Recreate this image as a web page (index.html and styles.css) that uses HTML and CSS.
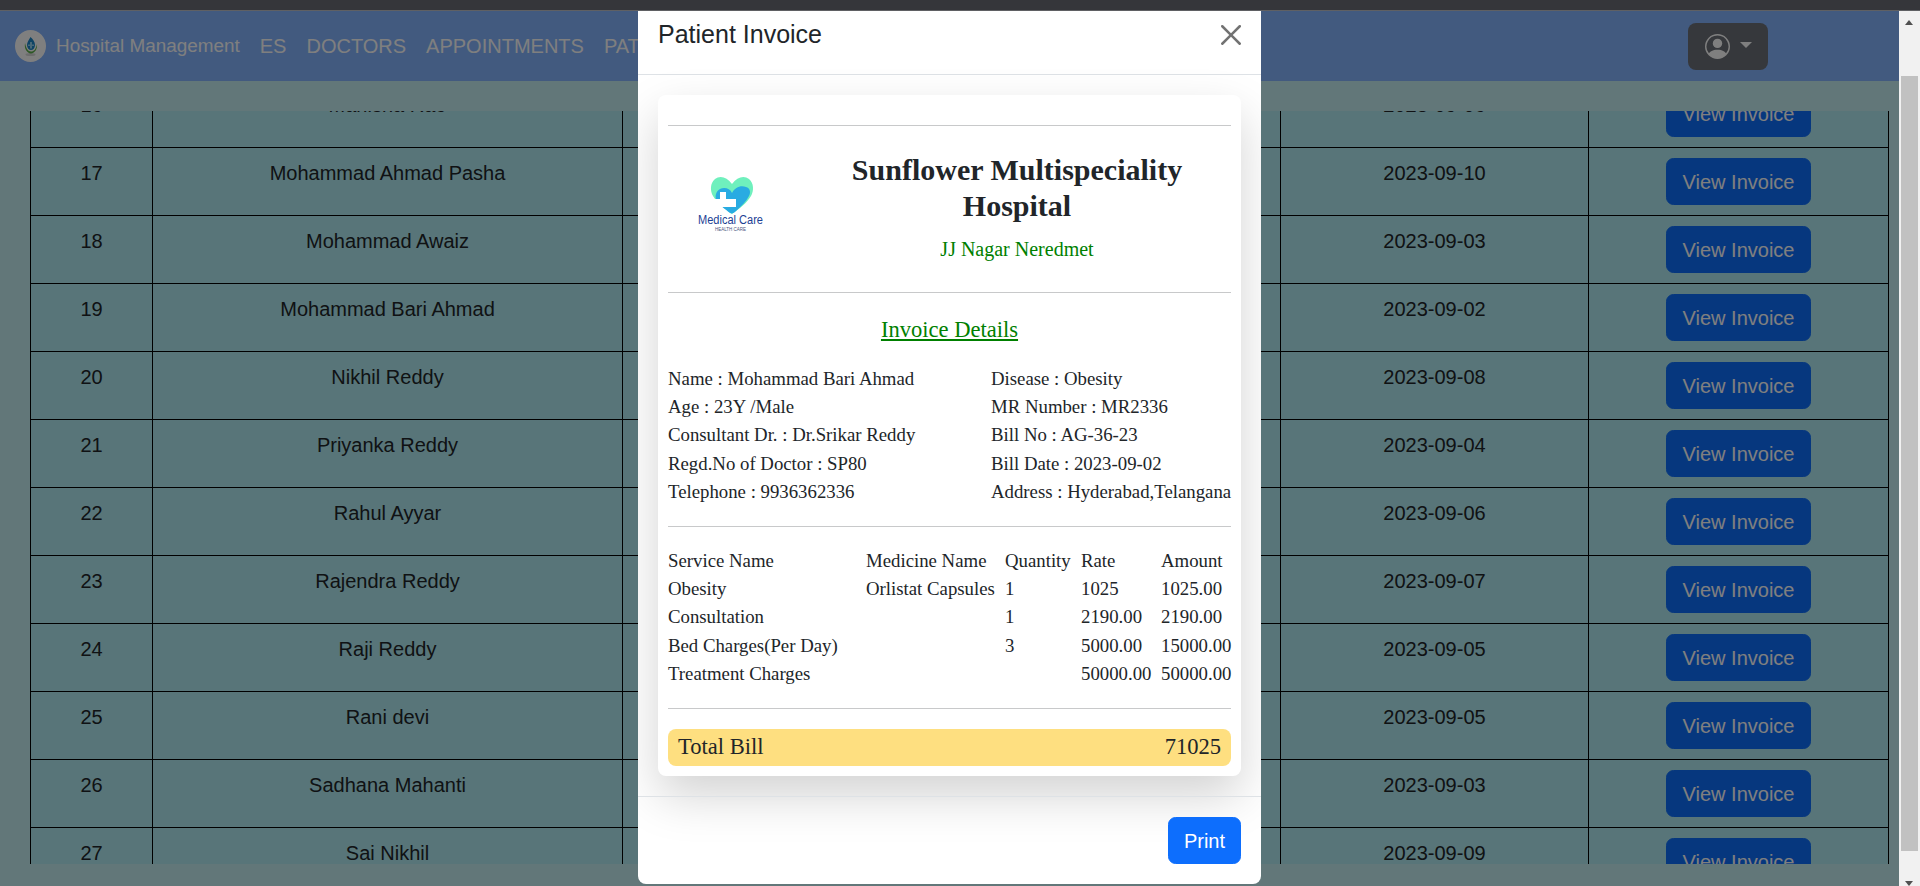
FILE: index.html
```html
<!DOCTYPE html>
<html>
    <head>
        <title>Hospital Management</title>
        <meta charset="UTF-8">
        <meta name="viewport" content="width=device-width, initial-scale=1.0">
        <link rel="stylesheet" href="styles.css">
    </head>
    <body>
        <div class="topstrip"></div>
        <div class="window">
            <div class="page">
                <nav class="navbar">
                    <svg class="brand-logo" viewBox="0 0 31 32">
                        <ellipse cx="15.5" cy="16" rx="15.5" ry="16" fill="#fff"/>
                        <ellipse cx="15.5" cy="24.500" rx="5" ry="1.500" fill="#d8d8d8"/>
                        <path d="M10 13C9 19 12 23 16 23.500C20 23 22.500 19 22 14C21 19 19 21.500 16 21.500C13 21.500 11 18 10 13Z" fill="#5bb04a"/>
                        <path d="M15.500 7C18 9 20 12 20 15C20 18 18 20 16 20C14 20 12 18 12 15C12 12 14 10 15.500 7Z" fill="#1b86c9"/>
                        <path d="M15 12H17V14.500H19V16H17V18.500H15V16H13V14.500H15Z" fill="#8fd0f0"/>
                    </svg>
                    <a class="brand">Hospital Management</a>
                    <a class="nav-link">ES</a>
                    <a class="nav-link">DOCTORS</a>
                    <a class="nav-link">APPOINTMENTS</a>
                    <a class="nav-link">PATIENTS</a>
                    <button class="profile-btn">
                        <svg class="profile-icon" viewBox="0 0 16 16" fill="currentColor">
                            <path d="M11 6a3 3 0 1 1-6 0 3 3 0 0 1 6 0z"/>
                            <path fill-rule="evenodd" d="M0 8a8 8 0 1 1 16 0A8 8 0 0 1 0 8zm8-7a7 7 0 0 0-5.468 11.37C3.242 11.226 4.805 10 8 10s4.757 1.225 5.468 2.37A7 7 0 0 0 8 1z"/>
                        </svg>
                        <span class="caret"></span>
                    </button>
                </nav>
                <div class="content">
                    <div class="table-clip">
                        <table class="patients">
                            <tbody>
                                <tr><td>16</td><td>Manisha Rao</td><td></td><td>2023-09-06</td><td><button class="view-btn">View Invoice</button></td></tr>
                                <tr><td>17</td><td>Mohammad Ahmad Pasha</td><td></td><td>2023-09-10</td><td><button class="view-btn">View Invoice</button></td></tr>
                                <tr><td>18</td><td>Mohammad Awaiz</td><td></td><td>2023-09-03</td><td><button class="view-btn">View Invoice</button></td></tr>
                                <tr><td>19</td><td>Mohammad Bari Ahmad</td><td></td><td>2023-09-02</td><td><button class="view-btn">View Invoice</button></td></tr>
                                <tr><td>20</td><td>Nikhil Reddy</td><td></td><td>2023-09-08</td><td><button class="view-btn">View Invoice</button></td></tr>
                                <tr><td>21</td><td>Priyanka Reddy</td><td></td><td>2023-09-04</td><td><button class="view-btn">View Invoice</button></td></tr>
                                <tr><td>22</td><td>Rahul Ayyar</td><td></td><td>2023-09-06</td><td><button class="view-btn">View Invoice</button></td></tr>
                                <tr><td>23</td><td>Rajendra Reddy</td><td></td><td>2023-09-07</td><td><button class="view-btn">View Invoice</button></td></tr>
                                <tr><td>24</td><td>Raji Reddy</td><td></td><td>2023-09-05</td><td><button class="view-btn">View Invoice</button></td></tr>
                                <tr><td>25</td><td>Rani devi</td><td></td><td>2023-09-05</td><td><button class="view-btn">View Invoice</button></td></tr>
                                <tr><td>26</td><td>Sadhana Mahanti</td><td></td><td>2023-09-03</td><td><button class="view-btn">View Invoice</button></td></tr>
                                <tr><td>27</td><td>Sai Nikhil</td><td></td><td>2023-09-09</td><td><button class="view-btn">View Invoice</button></td></tr>
                            </tbody>
                        </table>
                    </div>
                </div>
                <div class="backdrop"></div>
                <div class="modal">
                    <div class="modal-header">
                        <h5 class="modal-title">Patient Invoice</h5>
                        <svg class="close-x" viewBox="0 0 16 16" fill="#000">
                            <path d="M.293.293a1 1 0 0 1 1.414 0L8 6.586 14.293.293a1 1 0 1 1 1.414 1.414L9.414 8l6.293 6.293a1 1 0 0 1-1.414 1.414L8 9.414l-6.293 6.293a1 1 0 0 1-1.414-1.414L6.586 8 .293 1.707a1 1 0 0 1 0-1.414z"/>
                        </svg>
                    </div>
                    <div class="modal-body">
                        <div class="invoice">
                            <hr>
                            <div class="hospital">
                                <svg class="hospital-logo" viewBox="0 0 120 90">
                                    <path d="M52 24C47 17 40 15 35 19C30 23 30 31 33 36C37 43 45 49 52 54C59 49 67 43 71 36C74 31 74 23 69 19C64 15 57 17 52 24Z" fill="#6ff0bd"/>
                                    <path d="M52 33C50 28 44 27 40 29C36 31 35 36 36 39C38 44 45 49 50 53C52 54 54 53 56 51C61 46 66 42 69 36C71 32 70 28 66 27C61 25 55 27 52 33Z" fill="#29abe2"/>
                                    <path d="M40 39V32H46V39H56V47H31V39Z" fill="#fff"/>
                                    <text class="logo-name" x="18" y="64" textLength="65" lengthAdjust="spacingAndGlyphs">Medical Care</text>
                                    <text class="logo-sub" x="35" y="71" textLength="31" lengthAdjust="spacingAndGlyphs">HEALTH CARE</text>
                                </svg>
                                <div class="hospital-text">
                                    <h2 class="hospital-name">Sunflower Multispeciality Hospital</h2>
                                    <div class="hospital-address">JJ Nagar Neredmet</div>
                                </div>
                            </div>
                            <hr>
                            <h4 class="invoice-title">Invoice Details</h4>
                            <div class="details">
                                <div>
                                    <div>Name : Mohammad Bari Ahmad</div>
                                    <div>Age : 23Y /Male</div>
                                    <div>Consultant Dr. : Dr.Srikar Reddy</div>
                                    <div>Regd.No of Doctor : SP80</div>
                                    <div>Telephone : 9936362336</div>
                                </div>
                                <div>
                                    <div>Disease : Obesity</div>
                                    <div>MR Number : MR2336</div>
                                    <div>Bill No : AG-36-23</div>
                                    <div>Bill Date : 2023-09-02</div>
                                    <div>Address : Hyderabad,Telangana</div>
                                </div>
                            </div>
                            <hr>
                            <table class="services">
                                <tr><td>Service Name</td><td>Medicine Name</td><td>Quantity</td><td>Rate</td><td>Amount</td></tr>
                                <tr><td>Obesity</td><td>Orlistat Capsules</td><td>1</td><td>1025</td><td>1025.00</td></tr>
                                <tr><td>Consultation</td><td></td><td>1</td><td>2190.00</td><td>2190.00</td></tr>
                                <tr><td>Bed Charges(Per Day)</td><td></td><td>3</td><td>5000.00</td><td>15000.00</td></tr>
                                <tr><td>Treatment Charges</td><td></td><td></td><td>50000.00</td><td>50000.00</td></tr>
                            </table>
                            <hr>
                            <div class="total"><span>Total Bill</span><span>71025</span></div>
                        </div>
                    </div>
                    <div class="modal-footer">
                        <button class="print-btn">Print</button>
                    </div>
                </div>
            </div>
            <div class="scrollbar">
                <span class="arrow-up"></span>
                <div class="thumb"></div>
                <span class="arrow-down"></span>
            </div>
        </div>
    </body>
</html>
```

FILE: styles.css
```css
html, body{
    margin: 0;
    height: 886px;
    overflow: hidden;
}
body{
    font-family: "Liberation Sans", Arial, sans-serif;
    font-size: 20px;
    line-height: 1.5;
    color: #212529;
}
button{
    font-family: inherit;
    font-size: 20px;
    line-height: 30px;
}
.topstrip{
    height: 10px;
    background-color: #35363a;
    border-bottom: 1px solid #5f6063;
}
.window{
    display: flex;
    height: 875px;
}
.page{
    flex: 1;
    position: relative;
    background-color: #c5eff3;
    overflow: hidden;
}

/* navbar */
.navbar{
    display: flex;
    align-items: center;
    height: 70px;
    background-color: #84b4ff;
    padding-left: 15px;
    white-space: nowrap;
}
.brand-logo{
    width: 31px;
    height: 32px;
    margin-right: 10px;
}
.brand{
    color: #fff;
    font-size: 18.900px;
    margin-right: 10px;
}
.nav-link{
    color: #fff;
    padding: 0 10px;
}
.profile-btn{
    position: absolute;
    left: 1688px;
    top: 12px;
    width: 80px;
    height: 47px;
    display: flex;
    align-items: center;
    justify-content: center;
    gap: 10px;
    background-color: #6c7078;
    color: #fff;
    border: 0;
    border-radius: 8px;
}
.profile-icon{
    width: 25px;
    height: 25px;
}
.caret{
    border-top: 6px solid #fff;
    border-left: 6px solid transparent;
    border-right: 6px solid transparent;
    margin-bottom: 3px;
}

/* table */
.content{
    padding: 30px 10px 0 30px;
}
.table-clip{
    height: 753px;
    overflow: hidden;
}
.patients{
    width: 1859px;
    margin-top: -32px;
    border-collapse: collapse;
    table-layout: fixed;
    background-color: #b0ebf2;
}
.patients td{
    box-sizing: border-box;
    border: 1px solid #000;
    padding: 10px;
    height: 68px;
    text-align: center;
    vertical-align: top;
}
.patients td:nth-child(1){ width: 122px; }
.patients td:nth-child(2){ width: 470px; }
.patients td:nth-child(3){ width: 658px; }
.patients td:nth-child(4){ width: 308px; }
.view-btn, .print-btn{
    background-color: #0d6efd;
    color: #fff;
    border: 1px solid #0d6efd;
    border-radius: 7.5px;
    padding: 7.5px 15px;
}
.view-btn{
    width: 145px;
    display: block;
    margin: 0 auto;
}

/* modal */
.backdrop{
    position: absolute;
    inset: 0;
    background-color: rgba(0, 0, 0, 0.5);
}
.modal{
    position: absolute;
    left: 638px;
    top: 0;
    width: 623px;
    height: 873px;
    background-color: #fff;
    border-radius: 0 0 8px 8px;
    overflow: hidden;
    display: flex;
    flex-direction: column;
}
.modal-header{
    display: flex;
    justify-content: space-between;
    height: 63px;
    padding: 0 20px;
    border-bottom: 1px solid #dee2e6;
}
.modal-title{
    margin: 8px 0 0 0;
    font-size: 25px;
    font-weight: 400;
    line-height: 1.2;
}
.close-x{
    width: 20px;
    height: 20px;
    opacity: 0.55;
    margin-top: 14px;
}
.modal-body{
    padding: 20px;
}
.invoice{
    padding: 10px;
    background-color: #fff;
    border-radius: 8px;
    box-shadow: 0 20px 48px rgba(0, 0, 0, 0.175);
    font-family: "Liberation Serif", "Times New Roman", serif;
    font-size: 18.800px;
    line-height: 28.200px;
}
.invoice hr{
    margin: 20px 0;
    height: 1px;
    border: 0;
    background-color: #c8c9ca;
}
.hospital{
    display: flex;
    height: 126px;
}
.hospital-logo{
    width: 120px;
    height: 90px;
    margin: 14px 0 0 12px;
    flex-shrink: 0;
}
.logo-name{
    font-family: "Liberation Sans", sans-serif;
    font-size: 12.500px;
    fill: #1c3f94;
}
.logo-sub{
    font-family: "Liberation Sans", sans-serif;
    font-size: 5.500px;
    fill: #4c5680;
}
.hospital-text{
    flex: 1;
    padding: 6px 0 0 3px;
    text-align: center;
}
.hospital-name{
    margin: 0 0 10px 0;
    font-size: 30px;
    font-weight: 700;
    line-height: 36.500px;
}
.hospital-address{
    color: #008000;
    font-size: 20px;
}
.invoice-title{
    margin: 0 0 18.160px 0;
    color: #008000;
    font-size: 22.560px;
    font-weight: 400;
    line-height: 33.840px;
    text-align: center;
    text-decoration: underline;
}
.details{
    display: grid;
    grid-template-columns: 323px 1fr;
    white-space: nowrap;
}
.services{
    width: 563px;
    border-collapse: collapse;
    table-layout: fixed;
    white-space: nowrap;
}
.services td{
    padding: 0;
}
.services td:nth-child(1){ width: 198px; }
.services td:nth-child(2){ width: 139px; }
.services td:nth-child(3){ width: 76px; }
.services td:nth-child(4){ width: 80px; }
.total{
    display: flex;
    justify-content: space-between;
    align-items: center;
    height: 37px;
    padding: 0 10px;
    background-color: #fedf80;
    border-radius: 8px;
    font-size: 22.560px;
}
.modal-footer{
    display: flex;
    justify-content: flex-end;
    padding: 20px;
    border-top: 1px solid #dee2e6;
}

/* scrollbar */
.scrollbar{
    width: 21px;
    position: relative;
    background-color: #f1f1f1;
}
.thumb{
    position: absolute;
    left: 2px;
    right: 2px;
    top: 65px;
    height: 775px;
    background-color: #c1c1c1;
}
.arrow-up, .arrow-down{
    position: absolute;
    left: 6px;
    border-left: 4.500px solid transparent;
    border-right: 4.500px solid transparent;
}
.arrow-up{
    top: 9px;
    border-bottom: 5px solid #505050;
}
.arrow-down{
    bottom: 0;
    border-top: 5px solid #505050;
}
```
